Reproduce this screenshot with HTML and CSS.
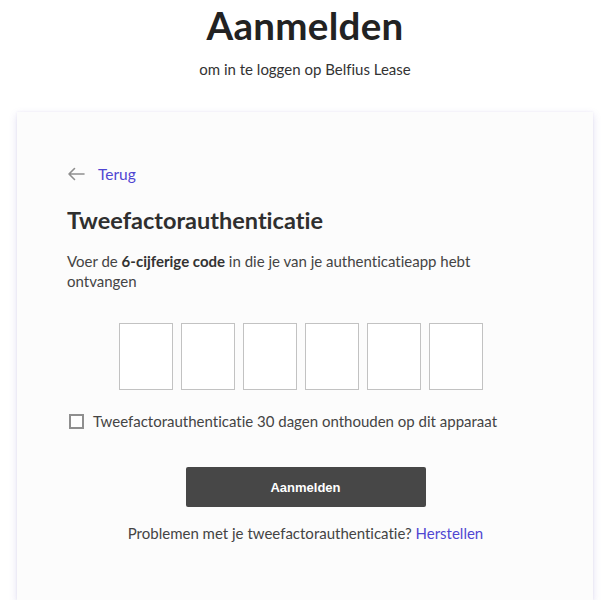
FILE: index.html
```html
<!DOCTYPE html>
<html lang="nl">
<head>
<meta charset="utf-8">
<title>Aanmelden</title>
<link rel="stylesheet" href="styles.css">
</head>
<body>
<main class="page">
  <header class="intro">
    <h1 class="title">Aanmelden</h1>
    <p class="subtitle">om in te loggen op Belfius Lease</p>
  </header>
  <section class="card">
    <a class="back" href="#">
      <svg class="back-icon" width="18" height="14" viewBox="0 0 18 14" aria-hidden="true">
        <path d="M17 7H2M7.5 1.5L2 7l5.5 5.5" fill="none" stroke="#8f8f8f" stroke-width="1.6" stroke-linecap="round" stroke-linejoin="round"/>
      </svg>
      <span>Terug</span>
    </a>
    <h2 class="heading">Tweefactorauthenticatie</h2>
    <p class="lead">Voer de <strong>6-cijferige code</strong> in die je van je authenticatieapp hebt ontvangen</p>
    <div class="code">
      <input class="digit" type="text" maxlength="1" aria-label="Cijfer 1">
      <input class="digit" type="text" maxlength="1" aria-label="Cijfer 2">
      <input class="digit" type="text" maxlength="1" aria-label="Cijfer 3">
      <input class="digit" type="text" maxlength="1" aria-label="Cijfer 4">
      <input class="digit" type="text" maxlength="1" aria-label="Cijfer 5">
      <input class="digit" type="text" maxlength="1" aria-label="Cijfer 6">
    </div>
    <label class="remember">
      <span class="box"></span>
      <span>Tweefactorauthenticatie 30 dagen onthouden op dit apparaat</span>
    </label>
    <div class="actions">
      <button class="submit" type="button">Aanmelden</button>
      <p class="help">Problemen met je tweefactorauthenticatie? <a href="#" class="link">Herstellen</a></p>
    </div>
  </section>
</main>
</body>
</html>
```

FILE: styles.css
```css
* { box-sizing: border-box; }
html, body { margin: 0; padding: 0; background: #ffffff; }
body {
  font-family: Lato, "Open Sans", sans-serif;
  font-variant-ligatures: none;
  color: #333;
}
.page {
  width: 576px;
  margin-left: 17px;
  padding-top: 1px;
}
.intro { text-align: center; }
.title {
  margin: 2px 0 0;
  font-size: 38.5px;
  font-weight: 700;
  line-height: 44px;
  color: #222;
  letter-spacing: 0.3px;
}
.subtitle {
  margin: 12px 0 0;
  font-size: 15px;
  line-height: 20px;
  color: #333;
}
.card {
  margin-top: 33px;
  height: 488px;
  background: #fcfcfc;
  box-shadow: 0 3px 8px rgba(90, 80, 180, 0.18), 0 0 2px rgba(90, 80, 180, 0.08);
  padding: 52px 49px 0 50px;
}
.back {
  display: flex;
  align-items: center;
  gap: 13px;
  text-decoration: none;
  color: #5046d2;
  font-size: 15.5px;
  line-height: 20px;
  width: max-content;
}
.back-icon { display: block; }
.heading {
  margin: 21px 0 0;
  font-size: 23.5px;
  line-height: 30px;
  font-weight: 700;
  color: #2f2f2f;
}
.lead {
  margin: 16px 0 0;
  max-width: 420px;
  font-size: 15px;
  line-height: 20px;
  color: #444;
}
.lead strong { color: #333; }
.code {
  display: flex;
  gap: 8px;
  margin-top: 32px;
  padding-left: 52px;
}
.digit {
  width: 54px;
  height: 67px;
  border: 1px solid #c2c2c2;
  border-radius: 0;
  background: #fff;
  margin: 0;
  padding: 0;
  font: inherit;
  font-size: 24px;
  text-align: center;
  outline: none;
}
.remember {
  display: flex;
  align-items: center;
  gap: 9px;
  margin-top: 21px;
  margin-left: 2px;
  font-size: 15px;
  line-height: 20px;
  color: #444;
}
.box {
  width: 15px;
  height: 15px;
  border: 2px solid #8f8f8f;
  background: #fff;
  flex: none;
}
.actions {
  display: flex;
  flex-direction: column;
  align-items: center;
  margin-top: 36px;
}
.submit {
  width: 240px;
  height: 40px;
  border: none;
  border-radius: 2px;
  background: #474747;
  color: #fff;
  font-family: "Liberation Sans", Arial, sans-serif;
  font-weight: 700;
  font-size: 13px;
}
.help {
  margin: 16px 0 0;
  font-size: 15px;
  line-height: 20px;
  color: #444;
}
.link { color: #5046d2; text-decoration: none; }
```
